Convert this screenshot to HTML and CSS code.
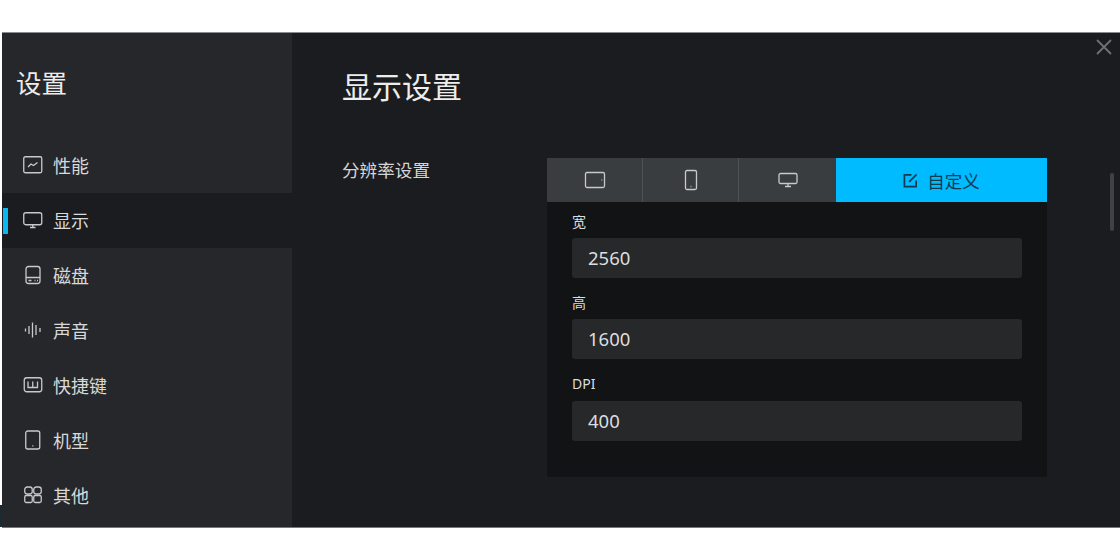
FILE: index.html
```html
<!DOCTYPE html>
<html lang="zh-CN">
<head>
<meta charset="utf-8">
<title>设置</title>
<link rel="stylesheet" href="styles.css">
</head>
<body>
<div class="edge-strip"></div>
<div class="window">
  <aside class="sidebar">
    <h1 class="side-title">设置</h1>
    <nav class="nav">
      <div class="nav-item">
        <svg class="ico" viewBox="0 0 20 20"><rect x="0.750" y="1.750" width="18" height="16" rx="1.500"/><path d="M5 12l3-3 2.500 1.500L14.500 7.500"/></svg>
        <span>性能</span>
      </div>
      <div class="nav-item active">
        <span class="marker"></span>
        <svg class="ico" viewBox="0 0 20 20"><rect x="0.750" y="2.750" width="18" height="12" rx="2"/><path d="M7 17.500h5.500M9.750 15v2.500"/></svg>
        <span>显示</span>
      </div>
      <div class="nav-item">
        <svg class="ico" viewBox="0 0 20 20"><rect x="3" y="1.500" width="14" height="17" rx="2.500"/><path d="M3 12.500h14M5.500 15.500h3M11.500 15.500h1M14 15.500h1"/></svg>
        <span>磁盘</span>
      </div>
      <div class="nav-item">
        <svg class="ico" viewBox="0 0 20 20"><path d="M2.500 8.500v3M6 6v8M9.500 2.500v15M13 5v10M17 8v4"/></svg>
        <span>声音</span>
      </div>
      <div class="nav-item">
        <svg class="ico" viewBox="0 0 20 20"><rect x="1.250" y="2.750" width="17.500" height="14" rx="2.500"/><path d="M5 6.500v6h9.500v-6M9.750 6.500v6"/></svg>
        <span>快捷键</span>
      </div>
      <div class="nav-item">
        <svg class="ico" viewBox="0 0 20 20"><rect x="2.750" y="1" width="14" height="18" rx="2"/><path d="M9.200 15.800h1.200"/></svg>
        <span>机型</span>
      </div>
      <div class="nav-item">
        <svg class="ico" viewBox="0 0 20 20"><rect x="1.750" y="2" width="7.500" height="7" rx="2.500"/><rect x="10.750" y="2" width="7.500" height="7" rx="2.500"/><rect x="1.750" y="10.500" width="7.500" height="7" rx="1.500"/><rect x="10.750" y="10.500" width="7.500" height="7" rx="1.500"/></svg>
        <span>其他</span>
      </div>
    </nav>
  </aside>
  <main class="main">
    <h2 class="page-title">显示设置</h2>
    <section class="setting">
      <div class="setting-label">分辨率设置</div>
      <div class="panel">
        <div class="tabs">
          <div class="tab tab-a"><svg class="tab-ico" viewBox="0 0 22 22"><rect x="1.500" y="3.500" width="19" height="15" rx="1.500"/><path d="M17.500 11h.7"/></svg></div>
          <div class="tab tab-a"><svg class="tab-ico" viewBox="0 0 22 22"><rect x="5.500" y="1.500" width="11" height="19" rx="1.500"/><path d="M10.600 17.500h.8"/></svg></div>
          <div class="tab tab-a"><svg class="tab-ico" viewBox="0 0 22 22"><rect x="2" y="4.500" width="18" height="10" rx="1.500"/><path d="M8 17.500h6M11 14.500v3"/></svg></div>
          <div class="tab tab-on"><svg class="edit-ico" viewBox="0 0 16 16"><path d="M14 8v6.500H1.500V2H9"/><path d="M6.500 9.500L14.500 1.500"/></svg><span>自定义</span></div>
        </div>
        <div class="fields">
          <label class="field"><span class="field-label">宽</span><div class="input">2560</div></label>
          <label class="field"><span class="field-label">高</span><div class="input">1600</div></label>
          <label class="field"><span class="field-label label-tall">DPI</span><div class="input">400</div></label>
        </div>
      </div>
    </section>
    <svg class="close" viewBox="0 0 16 16"><path d="M1 1l14 14M15 1L1 15"/></svg>
    <div class="scrollbar"></div>
  </main>
</div>
</body>
</html>
```
FILE: styles.css
```css
* { box-sizing: border-box; }
html, body { margin: 0; padding: 0; }
body {
  background: #fff;
  width: 1120px;
  height: 560px;
  overflow: hidden;
  padding: 32px 0 0 2px;
  position: relative;
  font-family: "Noto Sans CJK SC", "Noto Sans", sans-serif;
  color: #e4e5e6;
}
.edge-strip {
  position: absolute;
  left: 0;
  top: 505px;
  width: 2px;
  height: 22px;
  background: #1c2a33;
}
.window {
  display: flex;
  height: 496px;
  background: #1b1c1f;
  border-top: 1px solid #8a8b8d;
  border-bottom: 1px solid #77787a;
}
.sidebar {
  width: 290px;
  flex: none;
  background: #26272b;
  display: flex;
  flex-direction: column;
}
.side-title {
  margin: 0;
  padding: 31px 0 0 14px;
  height: 105px;
  font-size: 25.500px;
  line-height: 36px;
  font-weight: 400;
  color: #ececec;
}
.nav { display: flex; flex-direction: column; }
.nav-item {
  position: relative;
  height: 55px;
  display: flex;
  align-items: center;
  gap: 10px;
  padding: 0 0 2px 21px;
  font-size: 18px;
  color: #d8d9da;
}
.nav-item.active { background: #1b1c1f; }
.marker {
  position: absolute;
  left: 1px;
  top: 15px;
  width: 5px;
  height: 26px;
  background: #0db7f2;
}
.ico {
  width: 20px;
  height: 20px;
  fill: none;
  stroke: #c8c9ca;
  stroke-width: 1.300;
  flex: none;
}
.main {
  position: relative;
  flex: 1;
  padding-left: 50px;
}
.page-title {
  margin: 0;
  padding-top: 31px;
  height: 125px;
  font-size: 30px;
  line-height: 42px;
  font-weight: 400;
  color: #ededed;
}
.setting { display: flex; align-items: flex-start; }
.setting-label {
  width: 205px;
  flex: none;
  margin-top: -1px;
  font-size: 17.600px;
  line-height: 26px;
  color: #d4d5d6;
}
.panel {
  width: 500px;
  height: 319px;
  background: #121315;
  border-radius: 0 0 3px 3px;
}
.tabs { display: flex; height: 44px; }
.tab {
  display: flex;
  align-items: center;
  justify-content: center;
}
.tab-a {
  width: 96px;
  background: #3a3d40;
  border-right: 1px solid #4e5154;
}
.tab-a:nth-child(3) { border-right: 0; width: 97px; }
.tab-on {
  flex: 1;
  background: #00bbff;
  color: #0f3a50;
  font-size: 17.500px;
  gap: 9px;
}
.tab-ico {
  width: 22px;
  height: 22px;
  fill: none;
  stroke: #c8c9ca;
  stroke-width: 1.300;
}
.edit-ico {
  width: 15px;
  height: 15px;
  fill: none;
  stroke: #0f3a50;
  stroke-width: 1.800;
}
.fields {
  display: flex;
  flex-direction: column;
  padding: 6px 25px 0;
  gap: 11px;
}
.field { display: flex; flex-direction: column; }
.field-label {
  height: 30px;
  font-size: 14px;
  line-height: 28px;
  color: #dcdcdc;
  font-family: "Noto Sans", "Noto Sans CJK SC", sans-serif;
}
.label-tall { height: 31px; }
.input {
  height: 40px;
  background: #27282a;
  border-radius: 3px;
  padding-left: 16px;
  font-size: 18.500px;
  line-height: 40px;
  color: #dddedf;
  font-family: "Noto Sans", sans-serif;
}
.close {
  position: absolute;
  right: 8px;
  top: 6px;
  width: 16px;
  height: 16px;
  fill: none;
  stroke: #6f7073;
  stroke-width: 1.800;
}
.scrollbar {
  position: absolute;
  right: 6px;
  top: 140px;
  width: 4px;
  height: 58px;
  border-radius: 2px;
  background: #404145;
}
```
